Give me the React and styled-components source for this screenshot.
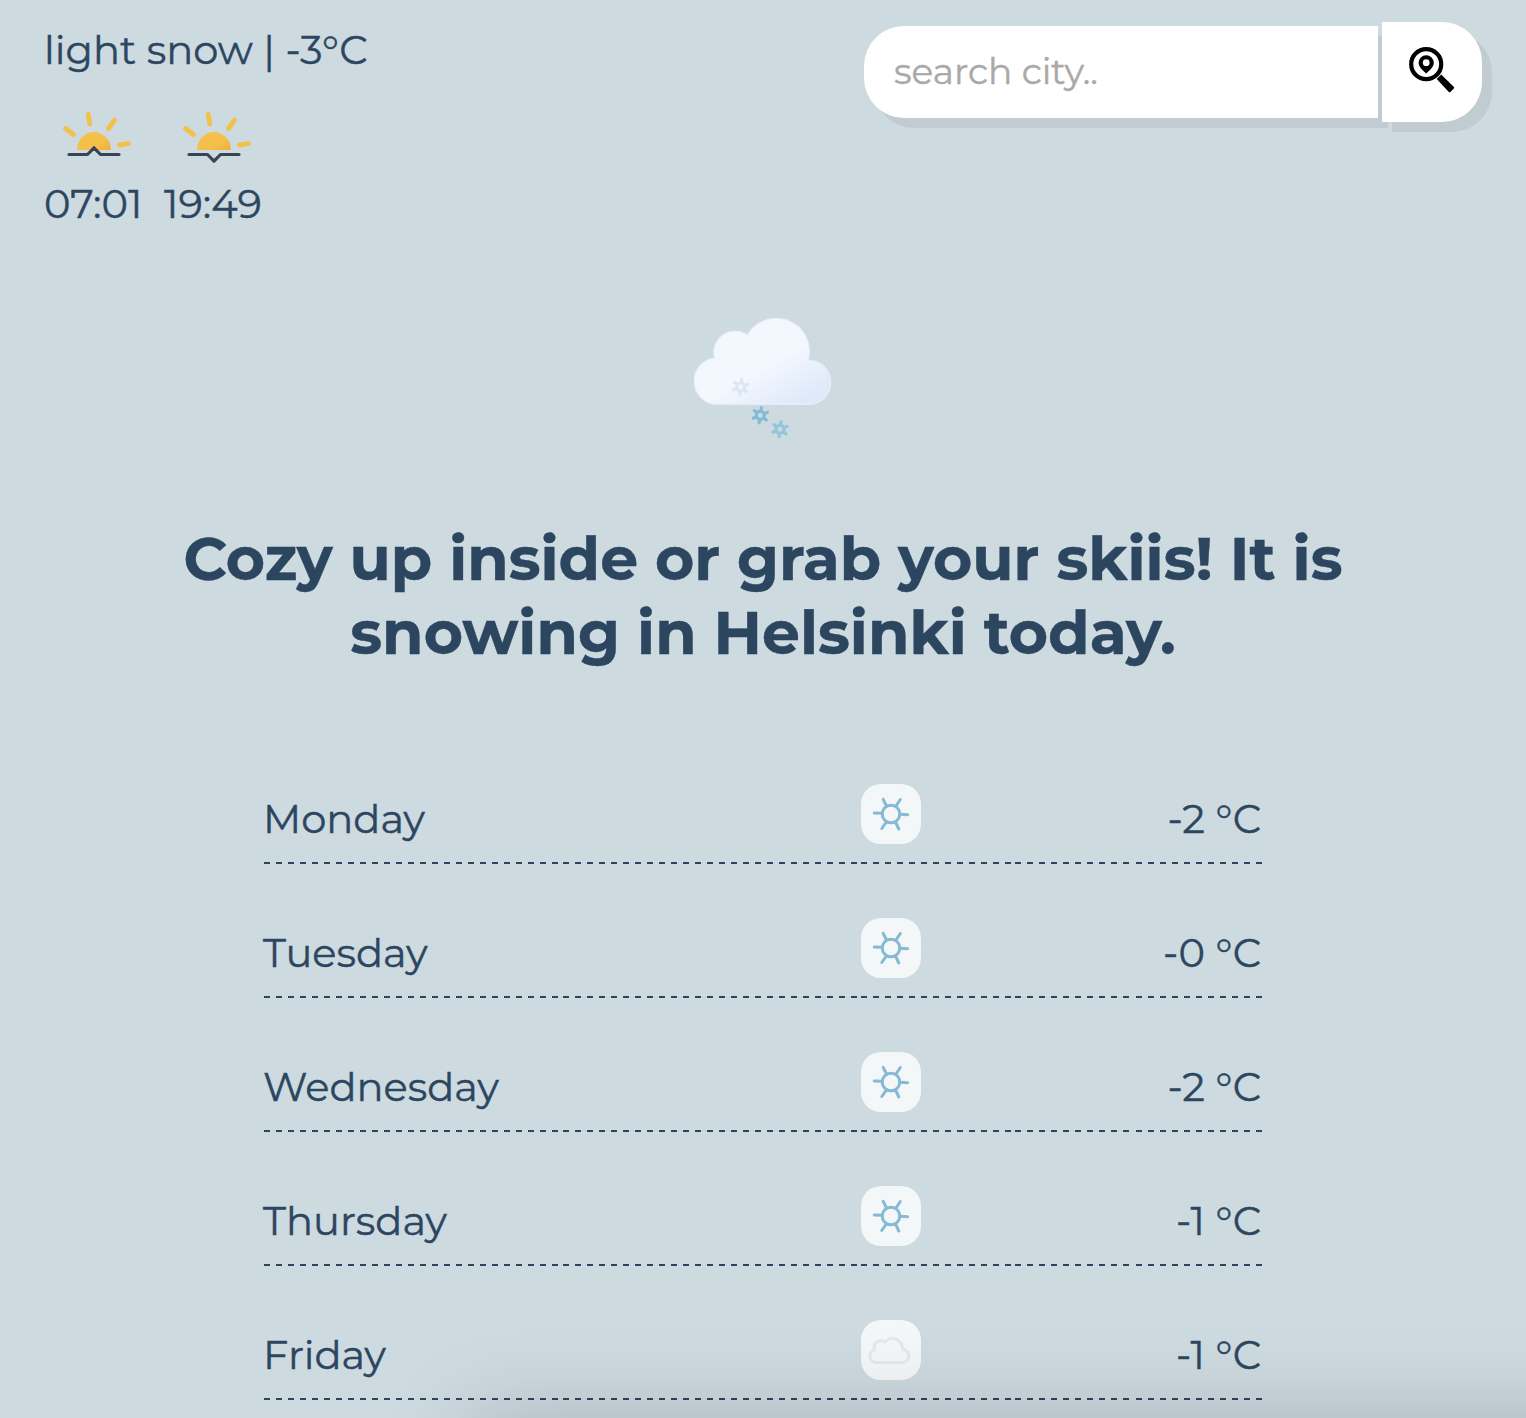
import React from "react";
import styled, { createGlobalStyle } from "styled-components";

const Global = createGlobalStyle`
  * { box-sizing: border-box; }
  body {
    margin: 0;
    background: #cddae0;
    color: #2c4660;
    font-family: Montserrat, Inter, sans-serif;
    overflow: hidden;
  }
`;

const Page = styled.div`
  position: relative;
  height: 1418px;
  overflow: hidden;
`;

const Header = styled.header`
  display: flex;
  justify-content: space-between;
  align-items: flex-start;
  height: 318px;
  padding: 22px 44px 0;
`;

const Text = styled.span`
  font-size: ${(p) => p.$size || 40}px;
  line-height: ${(p) => p.$line || 56}px;
  white-space: nowrap;
  -webkit-text-stroke: 0.4px currentColor;
`;

const Current = styled.div`
  display: flex;
  flex-direction: column;
`;

const SunTimes = styled.div`
  display: flex;
  gap: 20px;
  margin-top: 24px;
`;

const SunTime = styled.div`
  display: flex;
  flex-direction: column;
  width: 100px;
  svg { display: block; margin-bottom: 2px; }
`;

const Search = styled.form`
  display: flex;
  align-items: center;
  gap: 4px;
`;

const Input = styled.input`
  width: 514px;
  height: 92px;
  padding: 0 30px 2px;
  border: 0;
  border-radius: 40px 0 0 40px;
  background: #fff;
  box-shadow: 10px 10px 0 #c1ccd2;
  font: 400 36px Montserrat, Inter, sans-serif;
  &::placeholder {
    color: #a9a9a9;
    opacity: 1;
    -webkit-text-stroke: 0.4px #a9a9a9;
  }
`;

const SearchButton = styled.button`
  display: flex;
  align-items: center;
  justify-content: center;
  width: 100px;
  height: 100px;
  padding: 0;
  border: 0;
  border-radius: 0 40px 40px 0;
  background: #fff;
  box-shadow: 10px 10px 0 #c1ccd2;
`;

const Hero = styled.section`
  display: flex;
  flex-direction: column;
  align-items: center;
  svg { display: block; }
`;

const Title = styled.h1`
  display: flex;
  flex-direction: column;
  align-items: center;
  margin: 80px 0 0;
  font-weight: 700;
`;

const Forecast = styled.ul`
  display: flex;
  flex-direction: column;
  gap: 54px;
  width: 998px;
  margin: 114px auto 0;
  padding: 0;
  list-style: none;
`;

const Day = styled.li`
  display: grid;
  grid-template-columns: 597px 154px 247px;
  height: 80px;
`;

const Cell = styled.div`
  display: flex;
  justify-content: ${(p) => (p.$end ? "flex-end" : "flex-start")};
  padding-top: ${(p) => (p.$icon ? 0 : 7)}px;
  background: repeating-linear-gradient(
      90deg,
      #2c4660 0 6px,
      transparent 6px ${(p) => p.$period}px
    ) 0 100% / 100% 2px no-repeat;
  ${Text} { margin: 0 1px 0 -1px; }
`;

const Tile = styled.div`
  width: 60px;
  height: 60px;
  border-radius: 20px;
  background: #f3f7f8;
  svg { display: block; }
`;

const Shade = styled.div`
  position: absolute;
  left: 480px;
  right: -100px;
  top: 1428px;
  height: 100px;
  box-shadow: 0 0 90px 12px rgba(0, 0, 0, 0.17);
  pointer-events: none;
`;

const Sun = ({ down }) => (
  <svg width="100" height="80" viewBox="0 0 100 80" fill="none">
    <defs>
      <linearGradient id="sun" x1="0" y1="0" x2="1" y2="1">
        <stop offset=".6" stopColor="#f3c14a" />
        <stop offset="1" stopColor="#efad3f" />
      </linearGradient>
    </defs>
    <path d="M33 48a17 18 0 0 1 34 0z" fill="url(#sun)" />
    <g stroke="#f3c14a" strokeWidth="4.8" strokeLinecap="round">
      <path d="M44.300 12.300l1.500 9.700M21.500 26.500l8 6M70.500 18l-6 8.500M75.500 43l9-1.300" />
    </g>
    <path
      d={down ? "M25 52.500h18.500l6.500 6.700 6.500-6.700h18.500" : "M25 52.500h18.500l6.500-6.700 6.500 6.700h18.500"}
      stroke="#3a4456" strokeWidth="3.200" strokeLinecap="round" strokeLinejoin="round"
    />
  </svg>
);

const SearchIcon = () => (
  <svg width="50" height="50" viewBox="0 0 50 50">
    <circle cx="19.200" cy="17.200" r="15" fill="none" stroke="#000" strokeWidth="4.200" />
    <path fillRule="evenodd" d="M19.200 8.200a7.600 7.600 0 0 0-7.600 7.600c0 3.900 4 7.600 7.600 10.600 3.600-3 7.600-6.700 7.600-10.600a7.600 7.600 0 0 0-7.600-7.600zm0 4.100a3.400 3.400 0 1 1 0 6.800 3.400 3.400 0 0 1 0-6.800z" />
    <path d="M29.700 32l4.500-4.500 12.500 12.200q1 1 0 2l-3.100 3.100q-1 1-2 0z" />
  </svg>
);

const Flake = ({ x, y, color }) => (
  <g transform={`translate(${x} ${y}) rotate(8)`} stroke={color} strokeWidth="3.200" strokeLinecap="round" fill="none">
    <circle r="4" />
    {[0, 60, 120, 180, 240, 300].map((a) => (
      <path key={a} d="M0-5V-7.600" transform={`rotate(${a})`} />
    ))}
  </g>
);

const SnowCloud = () => (
  <svg width="138" height="124" viewBox="694 318 138 124">
    <defs>
      <linearGradient id="cloud" gradientUnits="userSpaceOnUse" x1="738" y1="328" x2="786" y2="411">
        <stop offset="0" stopColor="#f3f7fe" />
        <stop offset=".5" stopColor="#f3f7fe" />
        <stop offset="1" stopColor="#dfe9f9" />
      </linearGradient>
    </defs>
    <path
      d="M718.500 404.400A23.300 23.300 0 0 1 714.500 358A21.500 21.500 0 0 1 747.500 334.800A33.200 33.200 0 0 1 808.300 360A22.200 22.200 0 0 1 808.800 404.400z"
      fill="url(#cloud)" stroke="#e6edf9" strokeWidth="1.200"
    />
    <Flake x={740.700} y={387} color="#dae8f3" />
    <Flake x={760.300} y={415.300} color="#86bbd5" />
    <Flake x={780} y={429.300} color="#96c4da" />
  </svg>
);

const SnowIcon = () => (
  <svg width="60" height="60" viewBox="0 0 60 60" fill="none" stroke="#86b9d5" strokeWidth="3" strokeLinecap="round">
    <circle cx="30" cy="30" r="8.800" />
    <path d="M21 29.300l-7.700-.300M39 30.300l7.700.400M25.500 22l-3.300-6.700M35 22l4.300-6.500M25.300 38l-4.500 6.500M34.500 38l3.300 7" />
  </svg>
);

const CloudIcon = () => (
  <svg width="60" height="60" viewBox="0 0 60 60" fill="none" stroke="#e5e7e9" strokeWidth="2.900" strokeLinejoin="round">
    <path d="M14 42.500a6.800 6.800 0 0 1-.5-13a6.800 6.800 0 0 1 10.500-7.500a10 10 0 0 1 17.500 7.500a6.500 6.500 0 0 1 0 13z" />
  </svg>
);

const days = [
  { name: "Monday", temp: "-2 °C" },
  { name: "Tuesday", temp: "-0 °C" },
  { name: "Wednesday", temp: "-2 °C" },
  { name: "Thursday", temp: "-1 °C" },
  { name: "Friday", temp: "-1 °C", cloudy: true },
];

export default function App() {
  return (
    <Page>
      <Global />
      <Header>
        <Current>
          <Text>light snow | -3°C</Text>
          <SunTimes>
            <SunTime><Sun /><Text $line={40}>07:01</Text></SunTime>
            <SunTime><Sun down /><Text $line={40}>19:49</Text></SunTime>
          </SunTimes>
        </Current>
        <Search>
          <Input placeholder="search city.." />
          <SearchButton type="button" aria-label="Search"><SearchIcon /></SearchButton>
        </Search>
      </Header>
      <Hero>
        <SnowCloud />
        <Title>
          <Text $size={60} $line={74}>Cozy up inside or grab your skiis! It is</Text>
          <Text $size={60} $line={74}>snowing in Helsinki today.</Text>
        </Title>
      </Hero>
      <Forecast>
        {days.map((d) => (
          <Day key={d.name}>
            <Cell $period={11.98}><Text>{d.name}</Text></Cell>
            <Cell $icon $period={12}><Tile>{d.cloudy ? <CloudIcon /> : <SnowIcon />}</Tile></Cell>
            <Cell $end $period={12.05}><Text>{d.temp}</Text></Cell>
          </Day>
        ))}
      </Forecast>
      <Shade />
    </Page>
  );
}
